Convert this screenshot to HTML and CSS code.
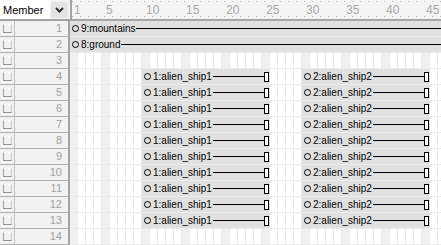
FILE: index.html
```html
<!DOCTYPE html>
<html lang="en">
<head>
    <meta charset="UTF-8">
    <title>Score</title>
    <link rel="stylesheet" href="styles.css">
</head>
<body>

    <div class="score">
        <div class="score-head">
            <div class="member-select">
                <span class="member-label">Member</span>
                <span class="member-btn">
                    <svg width="9" height="6" viewBox="0 0 9 6"><path d="M1 1 L4.5 4.5 L8 1" fill="none" stroke="#303030" stroke-width="2"/></svg>
                </span>
            </div>
            <div class="ruler">
                <span class="mark first">1</span>
                <span class="mark">5</span>
                <span class="mark">10</span>
                <span class="mark">15</span>
                <span class="mark">20</span>
                <span class="mark">25</span>
                <span class="mark">30</span>
                <span class="mark">35</span>
                <span class="mark">40</span>
                <span class="mark">45</span>
            </div>
        </div>

        <div class="rows" id="rows"></div>
    </div>

    <script src="script.js"></script>

</body>
</html>
```

FILE: script.js
```js
// Kanäle: welche Sprites liegen in welchem Channel
const channels = [
    [{ name: '9:mountains', cls: 'full' }],
    [{ name: '8:ground', cls: 'full' }],
    [],
];
for (let i = 4; i <= 13; i++) {
    channels.push([
        { name: '1:alien_ship1', cls: 'ship1' },
        { name: '2:alien_ship2', cls: 'ship2' },
    ]);
}
channels.push([]);

const rows = document.getElementById('rows');

channels.forEach(function (sprites, idx) {
    const row = document.createElement('div');
    row.className = 'row';

    const channel = document.createElement('div');
    channel.className = 'channel';
    channel.innerHTML = '<span class="toggle"><span class="toggle-box"></span></span>' +
        '<span class="num">' + (idx + 1) + '</span>';
    row.appendChild(channel);

    const frames = document.createElement('div');
    frames.className = 'frames';

    sprites.forEach(function (s) {
        const sprite = document.createElement('div');
        sprite.className = 'sprite ' + s.cls;
        sprite.innerHTML = '<span class="dot"></span>' +
            '<span class="sprite-name">' + s.name + '</span>' +
            '<span class="line"></span>' +
            (s.cls === 'full' ? '' : '<span class="end"></span>');
        frames.appendChild(sprite);
    });

    row.appendChild(frames);
    rows.appendChild(row);
});
```

FILE: styles.css
```css
body, html {
    margin: 0;
    padding: 0;
    background: #ffffff;
    font-family: 'Liberation Sans', Arial, sans-serif;
}

.score {
    width: 441px;
    height: 245px;
    overflow: hidden;
}

/* Kopfzeile mit Member-Auswahl und Frame-Lineal */
.score-head {
    display: flex;
    height: 19px;
    border-bottom: 2px solid #a4a4a4;
}

.member-select {
    width: 70px;
    border-right: 2px solid #a4a4a4;
    display: flex;
    align-items: center;
    background: #f4f4f4;
}

.member-label {
    flex: 1;
    align-self: stretch;
    display: flex;
    align-items: center;
    padding-left: 3px;
    background: #ffffff;
    font-size: 11px;
    color: #000000;
}

.member-btn {
    width: 17px;
    height: 16px;
    margin: 0 2px 0 1px;
    display: flex;
    align-items: center;
    justify-content: center;
    background: #e4e4e4;
    border-radius: 2px;
}

.ruler {
    flex: 1;
    display: flex;
    overflow: hidden;
    background-color: #f4f4f4;
    background-image:
        linear-gradient(to right, #b8b8b8 1px, transparent 1px),
        linear-gradient(to right, #b8b8b8 1px, transparent 1px);
    background-size: 8px 1px, 8px 1px;
    background-position: 0 1px, 0 16px;
    background-repeat: repeat-x;
}

.mark {
    flex: 0 0 40px;
    padding: 4px 0 0 2px;
    box-sizing: border-box;
    font-size: 12px;
    color: #a8a8a8;
    line-height: 12px;
}

.mark.first {
    flex-basis: 32px;
}

/* Kanäle */
.row {
    display: flex;
    height: 16px;
}

.channel {
    width: 70px;
    flex: 0 0 70px;
    display: flex;
    box-sizing: border-box;
    border-right: 2px solid #a4a4a4;
    border-bottom: 1px solid #b0b0b0;
    background: #f2f2f2;
    height: 16px;
}

.toggle {
    width: 15px;
    box-sizing: border-box;
    border-right: 1px solid #c0c0c0;
    display: flex;
    align-items: center;
    justify-content: center;
}

.toggle-box {
    width: 7px;
    height: 7px;
    border: 1px solid;
    border-color: #fafafa #c8c8c8 #909090 #a0a0a0;
}

.num {
    flex: 1;
    text-align: right;
    padding-right: 6px;
    font-size: 11px;
    line-height: 15px;
    color: #a0a0a0;
}

.frames {
    flex: 1;
    display: grid;
    grid-template-columns: repeat(47, 8px);
    grid-template-rows: 15px;
    overflow: hidden;
    border-bottom: 1px solid #ececec;
    background-color: #ffffff;
    background-image:
        linear-gradient(to right, transparent 7px, #ebebeb 7px),
        linear-gradient(to right, #f0f0f0 8px, transparent 8px),
        linear-gradient(to right, #f0f0f0 8px, transparent 8px);
    background-size: 8px 100%, 8px 100%, 40px 100%;
    background-position: 0 0, 0 0, 32px 0;
    background-repeat: repeat-x, no-repeat, repeat-x;
}

/* Sprites */
.sprite {
    display: flex;
    align-items: center;
    background: #e0e0e0;
    min-width: 0;
}

.sprite.full {
    grid-column: 1 / -1;
}

.sprite.ship1 {
    grid-column: 10 / 26;
}

.sprite.ship2 {
    grid-column: 30 / 46;
}

.dot {
    width: 5px;
    height: 5px;
    border: 1px solid #000000;
    border-radius: 50%;
    margin-left: 2px;
    flex: none;
}

.sprite-name {
    margin-left: 2px;
    font-size: 10px;
    color: #000000;
    white-space: nowrap;
}

.line {
    flex: 1;
    height: 1px;
    background: #000000;
    margin-left: 1px;
}

.end {
    width: 3px;
    height: 8px;
    border: 1px solid #000000;
    background: #ffffff;
    margin-right: 1px;
    flex: none;
}
```
